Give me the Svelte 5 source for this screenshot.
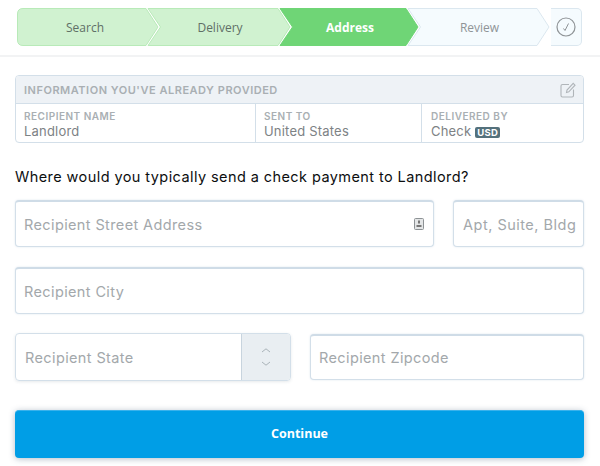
<script>
  const steps = [
    { label: 'Search', state: 'done', w: 142, first: true },
    { label: 'Delivery', state: 'done', w: 145 },
    { label: 'Address', state: 'active', w: 141 },
    { label: 'Review', state: 'todo', w: 144 }
  ];

  const colors = {
    done: { fill: '#d0f2d0', line: '#b8eab8' },
    active: { fill: '#6fd576', line: '#6fd576' },
    todo: { fill: '#f5fbfe', line: '#dbe7ef' }
  };

  function shape(step) {
    const r = step.w - 13;
    return step.first
      ? `M6 .5H${r}L${step.w - 1} 19L${r} 37.5H6Q.5 37.5 .5 32V6Q.5 .5 6 .5Z`
      : `M2 .5H${r}L${step.w - 1} 19L${r} 37.5H2L14.5 19Z`;
  }
</script>

<div class="page">
  <header class="top">
    <div class="stepper">
      {#each steps as step}
        <div class="step {step.state}" class:first={step.first} style="width: {step.w}px">
          <svg class="step-bg" width={step.w} height="38" viewBox="0 0 {step.w} 38">
            <path d={shape(step)} fill={colors[step.state].fill} stroke={colors[step.state].line} />
          </svg>
          <span>{step.label}</span>
        </div>
      {/each}
      <div class="finish">
        <svg width="20" height="20" viewBox="0 0 20 20" fill="none" stroke="#8f9497">
          <circle cx="10" cy="10" r="9" stroke-width="1.2" />
          <path d="M7.5 11.5L9 13.5L12.5 6.5" stroke-width="1" />
        </svg>
      </div>
    </div>
  </header>

  <main class="content">
    <section class="info">
      <div class="info-head">
        <span>INFORMATION YOU'VE ALREADY PROVIDED</span>
        <svg width="16" height="16" viewBox="0 0 16 16" fill="none" stroke="#b0b5b9" stroke-width="1.1">
          <path d="M9 2.5H2.5Q1 2.5 1 4V13.5Q1 15 2.5 15H12Q13.5 15 13.5 13.5V7.5" />
          <path d="M6.5 10.5L7 8L13.2 1.4L15 3.2L8.8 9.8Z" />
        </svg>
      </div>
      <div class="info-row">
        <div class="cell name">
          <small>RECIPIENT NAME</small>
          <p>Landlord</p>
        </div>
        <div class="cell sent">
          <small>SENT TO</small>
          <p>United States</p>
        </div>
        <div class="cell by">
          <small>DELIVERED BY</small>
          <p>Check <b class="usd">USD</b></p>
        </div>
      </div>
    </section>

    <h2>Where would you typically send a check payment to Landlord?</h2>

    <div class="row">
      <div class="field grow">
        <span class="ph">Recipient Street Address</span>
        <svg width="10" height="12" viewBox="0 0 10 12">
          <rect x=".5" y=".5" width="9" height="11" rx="1" fill="#e4e6e7" stroke="#8d9295" />
          <rect x="4" y="2.5" width="2" height="3" fill="#777" />
          <rect x="2.5" y="7" width="5" height="2" fill="#777" />
        </svg>
      </div>
      <div class="field apt"><span class="ph">Apt, Suite, Bldg</span></div>
    </div>

    <div class="row">
      <div class="field grow"><span class="ph">Recipient City</span></div>
    </div>

    <div class="row last">
      <div class="state">
        <span class="ph">Recipient State</span>
        <div class="spin">
          <svg width="10" height="18" viewBox="0 0 10 18" fill="none" stroke="#a9b2b8" stroke-width="1">
            <path d="M1 4L5 .8L9 4" />
            <path d="M1 14L5 17.2L9 14" />
          </svg>
        </div>
      </div>
      <div class="field zip"><span class="ph">Recipient Zipcode</span></div>
    </div>

    <button class="continue">Continue</button>
  </main>
</div>

<style>
  :global(body) {
    background: #fff;
  }

  .page {
    width: 600px;
    height: 466px;
    overflow: hidden;
    font-family: Inter, "Liberation Sans", sans-serif;
  }

  /* Stepper */
  .top {
    height: 47px;
    padding: 8px 18px 0 17px;
    border-bottom: 2px solid #f2f3f4;
  }

  .stepper {
    display: flex;
    height: 38px;
  }

  .step {
    position: relative;
    height: 38px;
    margin-right: -13px;
    display: flex;
    align-items: center;
    justify-content: center;
    font-family: "Open Sans", sans-serif;
    font-size: 12px;
    color: #5f6f66;
  }

  .step-bg {
    position: absolute;
    left: 0;
    top: 0;
  }

  .step span {
    position: relative;
    padding-left: 3px;
  }

  .step.first span {
    padding: 0 6px 0 0;
  }

  .step.active {
    color: #fff;
    font-weight: 700;
  }

  .step.todo {
    color: #8f9497;
  }

  .finish {
    margin-left: 14px;
    width: 31px;
    height: 38px;
    box-sizing: border-box;
    background: #f5fbfe;
    border: 1px solid #dbe7ef;
    border-left: none;
    border-radius: 0 5px 5px 0;
    display: flex;
    align-items: center;
    justify-content: center;
  }

  /* Info box */
  .content {
    padding: 18px 16px 0 15px;
  }

  .info {
    height: 68px;
    box-sizing: border-box;
    border: 1px solid #d3dfe9;
    border-radius: 4px;
    overflow: hidden;
  }

  .info-head {
    height: 28px;
    box-sizing: border-box;
    background: #eef2f6;
    border-bottom: 1px solid #d3dfe9;
    padding: 0 7px 0 8px;
    display: flex;
    align-items: center;
    justify-content: space-between;
    font-size: 11px;
    font-weight: 600;
    letter-spacing: 0.52px;
    color: #a9afb3;
  }

  .info-row {
    display: flex;
  }

  .cell {
    height: 38px;
    box-sizing: border-box;
    padding: 6px 0 0 8px;
    border-right: 1px solid #d3dfe9;
  }

  .name {
    width: 240px;
  }

  .sent {
    width: 166px;
  }

  .by {
    flex: 1;
    padding-left: 9px;
    border-right: none;
  }

  .cell small {
    display: block;
    font-size: 10px;
    line-height: 12px;
    font-weight: 600;
    letter-spacing: 0.5px;
    color: #a9afb3;
  }

  .cell p {
    margin: 1px 0 0;
    font-size: 13px;
    line-height: 16px;
    letter-spacing: 0.2px;
    color: #7d8285;
  }

  .usd {
    display: inline-block;
    background: #54717c;
    color: #fff;
    font-size: 9.5px;
    line-height: 11px;
    letter-spacing: 0.3px;
    padding: 0 2px;
    border-radius: 2px;
  }

  h2 {
    margin: 25px 0 0;
    font-size: 14.5px;
    line-height: 18px;
    font-weight: 400;
    letter-spacing: 0.42px;
    color: #0c0e0f;
  }

  /* Form */
  .row {
    display: flex;
    gap: 19px;
    margin-top: 20px;
  }

  h2 + .row {
    margin-top: 14px;
  }

  .row.last {
    margin-top: 19px;
  }

  .field {
    height: 47px;
    box-sizing: border-box;
    background: #fff;
    border: 1px solid #d3dfe9;
    border-top: 2px solid #cfdce7;
    border-radius: 4px;
    padding: 0 8px;
    display: flex;
    align-items: center;
    justify-content: space-between;
    box-shadow: 0 0 2px rgba(120, 160, 190, 0.25);
  }

  .grow {
    flex: 1;
    padding-right: 9px;
  }

  .apt {
    width: 131px;
    padding-left: 9px;
    padding-right: 0;
    overflow: hidden;
    white-space: nowrap;
  }

  .ph {
    font-size: 14.5px;
    letter-spacing: 0.38px;
    color: #a3a8ab;
  }

  .apt .ph {
    letter-spacing: 0.5px;
  }

  .state {
    width: 276px;
    height: 48px;
    box-sizing: border-box;
    border: 1px solid #d3dfe9;
    border-radius: 4px;
    padding-left: 9px;
    display: flex;
    align-items: center;
    justify-content: space-between;
    overflow: hidden;
    box-shadow: 0 1px 3px rgba(60, 80, 100, 0.12);
  }

  .spin {
    width: 48px;
    align-self: stretch;
    background: #e9eef2;
    border-left: 1px solid #c8d4de;
    display: flex;
    align-items: center;
    justify-content: center;
  }

  .zip {
    flex: 1;
    height: 46px;
    margin-top: 1px;
  }

  .continue {
    display: block;
    width: 100%;
    height: 48px;
    margin-top: 29px;
    padding: 0 0 3px;
    border: none;
    border-top: 1px solid #39b2ec;
    border-radius: 4px;
    background: #009ee6;
    color: #fff;
    font-family: "Open Sans", sans-serif;
    font-size: 12.5px;
    font-weight: 700;
    box-shadow: 0 1px 6px rgba(40, 70, 100, 0.35);
  }
</style>
